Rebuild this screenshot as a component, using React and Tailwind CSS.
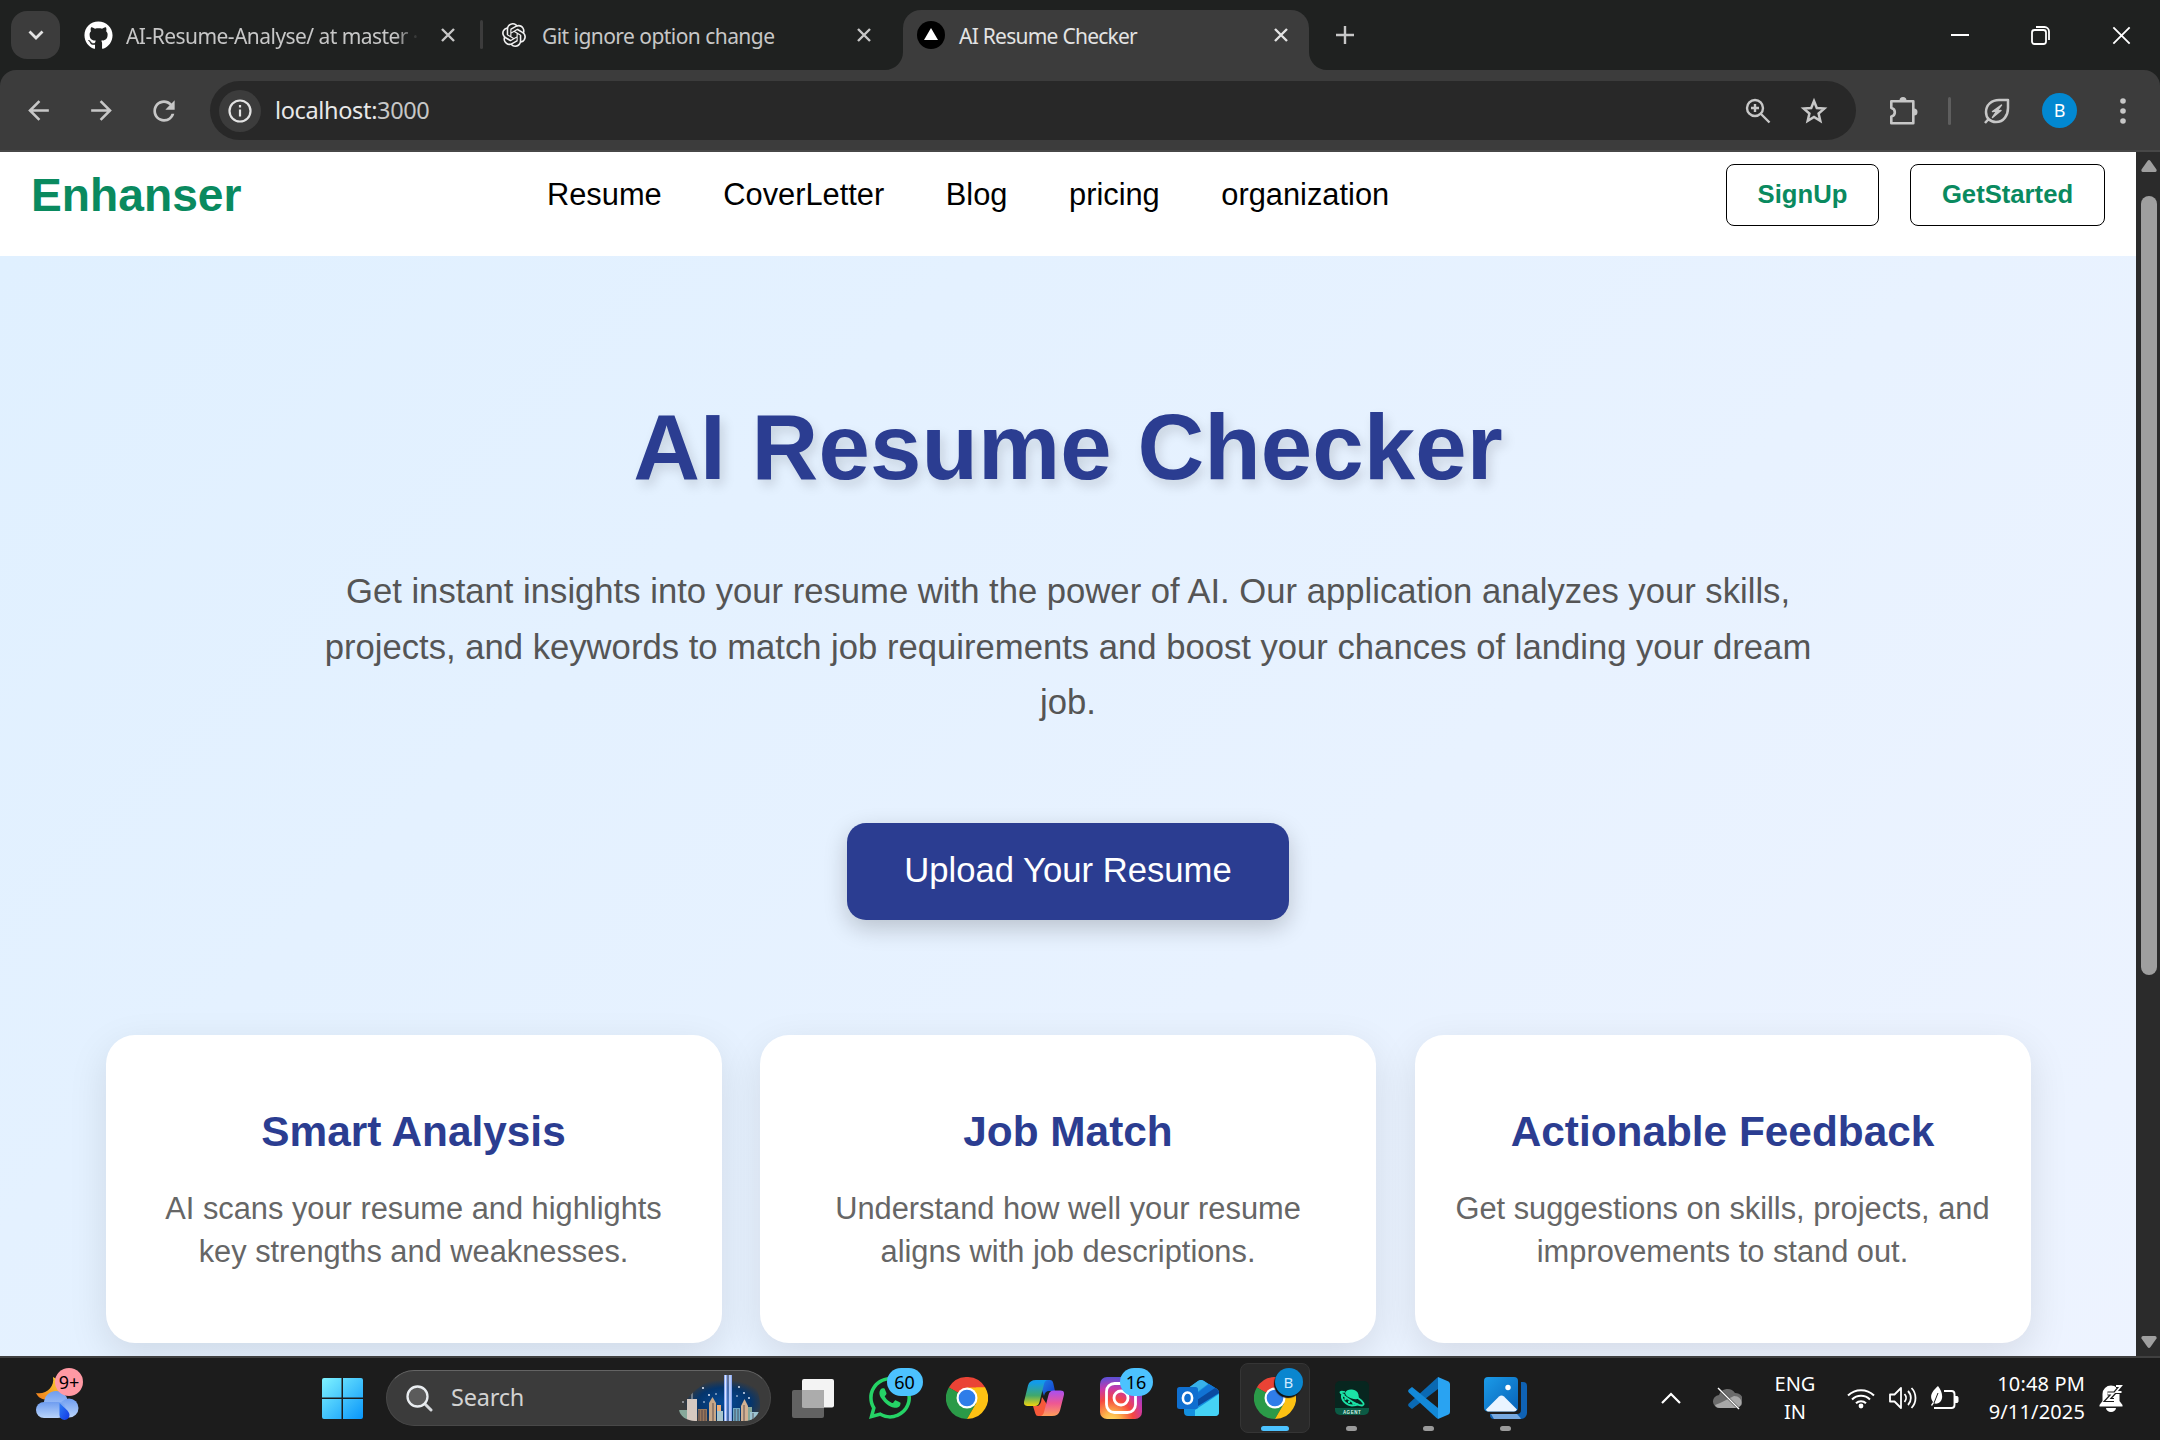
import React from "react";
import { FaGithub, FaWhatsapp } from "react-icons/fa";
import { SiOpenai } from "react-icons/si";
import { MdArrowBack, MdArrowForward, MdRefresh } from "react-icons/md";

const ui = "font-['Noto_Sans','Open_Sans',sans-serif]";
const arial = "font-['Liberation_Sans',Arial,sans-serif]";

function Cross({ className = "", size = 14, w = 2.4 }) {
  return (
    <svg width={size} height={size} viewBox="0 0 14 14" className={"shrink-0 " + className} fill="none" stroke="currentColor" strokeWidth={w}>
      <path d="M1 1 13 13M13 1 1 13" />
    </svg>
  );
}

function TabBar() {
  return (
    <div className={"flex h-[70px] bg-[#1f2120] text-[#c7c7c7] text-[21px] " + ui}>
      <div className="ml-[11px] mt-[11px] flex h-12 w-[49px] items-center justify-center rounded-[16px] bg-[#3c3c3c]">
        <svg width="16" height="10" viewBox="0 0 16 10" fill="none" stroke="#e3e3e3" strokeWidth="2.8"><path d="M1.5 1.5 8 8l6.500-6.500" /></svg>
      </div>
      <div className="flex h-[70px] w-[420px] items-center pl-6">
        <FaGithub size={29} color="#fff" className="shrink-0" />
        <div className="ml-[13px] w-[293px] shrink-0 whitespace-nowrap pt-[3px] [mask-image:linear-gradient(90deg,#000_92%,transparent)]"><span className="tracking-[-0.55px]">AI-Resume-Analyse/ at master ·</span></div>
        <Cross className="ml-[22px]" />
      </div>
      <div className="mt-5 h-[29px] w-[3px] rounded bg-[#3c3c3c]" />
      <div className="flex h-[70px] w-[402px] items-center pl-[19px]">
        <SiOpenai size={24} color="#f1f1f1" className="shrink-0" />
        <span className="ml-[16px] w-[315px] whitespace-nowrap pt-[3px] tracking-[-0.55px]">Git ignore option change</span>
        <Cross />
      </div>
      <svg width="18" height="18" viewBox="0 0 18 18" className="mt-[52px]"><path d="M18 0v18H0C10 18 18 10 18 0Z" fill="#3c3c3c" /></svg>
      <div className="mt-[10px] flex h-[60px] w-[406px] items-center rounded-t-[18px] bg-[#3c3c3c] pb-[10px] text-[#e3e3e3]">
        <svg width="28" height="28" viewBox="0 0 28 28" className="ml-[14px] shrink-0"><circle cx="14" cy="14" r="14" fill="#000" /><path d="M14 7 21 19H7Z" fill="#fff" /></svg>
        <span className="ml-[14px] w-[315px] whitespace-nowrap pt-[3px] tracking-[-0.75px]">AI Resume Checker</span>
        <Cross />
      </div>
      <svg width="18" height="18" viewBox="0 0 18 18" className="mt-[52px]"><path d="M0 0v18h18C8 18 0 10 0 0Z" fill="#3c3c3c" /></svg>
      <svg width="18" height="18" viewBox="0 0 18 18" className="ml-[9px] mt-[26px]" stroke="#c7c7c7" strokeWidth="2.4"><path d="M9 0v18M0 9h18" /></svg>
      <div className="ml-auto mr-[29px] flex h-[70px] items-center gap-[62px] text-white">
        <svg width="18" height="18" viewBox="0 0 18 18" stroke="#fff" strokeWidth="2"><path d="M0 9h18" /></svg>
        <svg width="19" height="19" viewBox="0 0 19 19" fill="none" stroke="#fff" strokeWidth="1.8"><rect x="1" y="4" width="14" height="14" rx="2.500" /><path d="M5 1h8.500A4.500 4.500 0 0 1 18 5.500V14" /></svg>
        <Cross size={19} w={1.35} />
      </div>
    </div>
  );
}

function Toolbar() {
  return (
    <div className="bg-[#1f2120]">
      <div className={"flex h-[82px] items-center rounded-t-[16px] border-b-2 border-[#474747] bg-[#3c3c3c] pt-px text-[#c7c7c7] " + ui}>
        <MdArrowBack size={31} className="ml-[23px]" />
        <MdArrowForward size={31} className="ml-[32px]" />
        <MdRefresh size={32} className="ml-[31px]" />
        <div className="ml-[30px] flex h-[59px] w-[1646px] items-center rounded-full bg-[#282828] pl-[9px]">
          <div className="flex size-[42px] items-center justify-center rounded-full bg-[#3c3c3c]">
            <svg width="24" height="24" viewBox="0 0 24 24" fill="none" stroke="#e3e3e3" strokeWidth="2.200"><circle cx="12" cy="12" r="10.500" /><path d="M12 10.500v7M12 6v2.600" /></svg>
          </div>
          <span className="ml-[14px] whitespace-nowrap pt-px text-[23.5px] tracking-[-0.35px] text-[#e8e8e8]">localhost:<span className="text-[#c7c7c7]">3000</span></span>
          <svg width="26" height="26" viewBox="0 0 26 26" className="ml-auto mr-[29px]" fill="none" stroke="#c7c7c7" strokeWidth="2.400"><circle cx="10" cy="10" r="8" /><path d="M15.500 15.500 24.500 24.500M10 6v8M6 10h8" /></svg>
          <svg width="28" height="28" viewBox="0 0 28 28" className="mr-[28px]" fill="none" stroke="#c7c7c7" strokeWidth="2.500"><path d="M14 4 16.800 11 24.300 11.600 18.600 16.500 20.300 23.800 14 19.900 7.700 23.800 9.400 16.500 3.700 11.600 11.200 11Z" /></svg>
        </div>
        <svg width="30" height="30" viewBox="0 0 30 30" className="ml-[33px] shrink-0" fill="none" stroke="#c7c7c7" strokeWidth="2.600" strokeLinejoin="round">
          <path d="M2.300 5.300H24.300V27.300H2.300V20.500c4.700-1 4.700-7.500 0-8.500Z" />
          <path d="M10.500 4.500a3.500 3.500 0 0 1 7 0ZM25 12.500a3.500 3.500 0 0 1 0 7Z" fill="#c7c7c7" stroke="none" />
        </svg>
        <div className="ml-[29px] h-7 w-[3px] rounded bg-[#5e5e5e]" />
        <svg width="26" height="26" viewBox="0 0 26 26" className="ml-[33px] shrink-0" fill="none" stroke="#c7c7c7" strokeWidth="2.500" strokeLinejoin="round">
          <path d="M24 2H15C7.500 2 2 7 2 14c0 6 4 10 10 10 8 0 12-7 12-14ZM5 20.500 1 25" /><path d="M17.500 7 8.500 13.500 17 12.500 8.500 19.500 12.500 13.500Z" strokeWidth="1.500" fill="#c7c7c7" />
        </svg>
        <div className="ml-[32px] flex size-[35px] items-center justify-center rounded-full bg-[#0288d1] text-[18px] text-white">B</div>
        <svg width="6" height="26" viewBox="0 0 6 26" className="ml-[43px]" fill="#c7c7c7"><circle cx="3" cy="3" r="2.800" /><circle cx="3" cy="13" r="2.800" /><circle cx="3" cy="23" r="2.800" /></svg>
      </div>
    </div>
  );
}

function Card({ title, lines }) {
  return (
    <div className="flex h-[308px] w-[616px] flex-col items-center rounded-[29px] bg-white pt-[73px] shadow-[0_12px_39px_rgba(0,0,0,0.1)]">
      <h2 className="text-[42.35px] font-bold leading-[48px] text-[#2b3d91]">{title}</h2>
      <p className="mt-[31px] whitespace-nowrap text-center text-[30.8px] leading-[43.1px] text-[#666]">{lines[0]}<br />{lines[1]}</p>
    </div>
  );
}

function Page() {
  return (
    <div className={"h-[1204px] w-[2136px] overflow-hidden bg-white " + arial}>
      <nav className="flex h-[104px] items-start pl-8 pr-[31px]">
        <div className="mt-[16px] w-[515px] text-[46.2px] font-bold leading-[54px] text-[#0a8a5f]"><span className="-ml-px">Enhanser</span></div>
        <div className="mt-[25px] flex gap-[61.6px] text-[30.8px] leading-[36px] text-black">
          <span>Resume</span><span>CoverLetter</span><span>Blog</span><span>pricing</span><span>organization</span>
        </div>
        <div className="ml-auto mt-[12px] flex gap-[31px] text-[25.67px] font-bold text-[#0a8a5f]">
          <button className="h-[62px] w-[153px] rounded-[8px] border border-black pb-[2px]">SignUp</button>
          <button className="h-[62px] w-[195px] rounded-[8px] border border-black pb-[2px]">GetStarted</button>
        </div>
      </nav>
      <main className="flex h-[1800px] flex-col items-center bg-[linear-gradient(135deg,#e0f0ff,#f0f4ff)]">
        <h1 className="mt-[138px] whitespace-nowrap text-[92.4px] font-bold leading-[106px] tracking-[0.1px] text-[#2b3d91] [text-shadow:4px_6px_12px_rgba(0,0,0,0.13)]">AI Resume Checker</h1>
        <p className="mt-[64px] w-[1540px] text-center text-[34.65px] leading-[55.5px] text-[#555]">Get instant insights into your resume with the power of AI. Our application analyzes your skills, projects, and keywords to match job requirements and boost your chances of landing your dream job.</p>
        <button className="mt-[92px] h-[97px] w-[442px] rounded-[19px] bg-[#2b3d91] pb-px text-[34.65px] text-white shadow-[0_8px_23px_rgba(0,0,0,0.2)]">Upload Your Resume</button>
        <div className="mt-[115px] flex gap-[38.5px]">
          <Card title="Smart Analysis" lines={["AI scans your resume and highlights", "key strengths and weaknesses."]} />
          <Card title="Job Match" lines={["Understand how well your resume", "aligns with job descriptions."]} />
          <Card title="Actionable Feedback" lines={["Get suggestions on skills, projects, and", "improvements to stand out."]} />
        </div>
      </main>
    </div>
  );
}

function Scrollbar() {
  return (
    <div className="flex w-6 flex-col items-center bg-[#2b2b2b] pl-px pt-2">
      <svg width="16" height="12" viewBox="0 0 16 12" fill="#9f9f9f"><path d="M6.500 1Q8-1 9.500 1L15.500 9.500Q16 12 14 12H2Q0 12 .5 9.500Z" /></svg>
      <div className="mt-6 h-[779px] w-4 rounded-full bg-[#9f9f9f]" />
      <svg width="16" height="12" viewBox="0 0 16 12" fill="#9f9f9f" className="mb-2 mt-auto"><path d="M6.500 11Q8 13 9.500 11L15.500 2.500Q16 0 14 0H2Q0 0 .5 2.500Z" /></svg>
    </div>
  );
}

function Chrome() {
  return (
    <svg width="42" height="42" viewBox="0 0 48 48">
      <path d="M24 24 3.200 12A24 24 0 0 1 44.800 12Z" fill="#ea4335" />
      <path d="M3.200 12A24 24 0 0 0 24 48L34.400 30 24 24Z" fill="#2b9a48" />
      <path d="M44.800 12A24 24 0 0 1 24 48L34.400 30V12Z" fill="#fdc113" />
      <path d="M24 12H44.800L34.400 30Z" fill="#fdc113" />
      <path d="M3.200 12 13.600 30 24 24Z" fill="#2b9a48" />
      <circle cx="24" cy="24" r="12" fill="#fff" /><circle cx="24" cy="24" r="9.500" fill="#2f7de9" />
    </svg>
  );
}

function Weather() {
  return (
    <svg width="44" height="44" viewBox="0 0 44 44">
      <defs>
        <linearGradient id="moon" x1="0" y1="1" x2="1" y2="0"><stop stopColor="#f07b1c" /><stop offset="1" stopColor="#fbd033" /></linearGradient>
        <linearGradient id="cl" x1="0" y1="0" x2="0" y2="1"><stop stopColor="#6f9df0" /><stop offset="1" stopColor="#b9d4fb" /></linearGradient>
        <linearGradient id="drop" x1="0" y1="0" x2="1" y2="1"><stop stopColor="#2c7cf5" /><stop offset="1" stopColor="#1238e6" /></linearGradient>
      </defs>
      <path d="M17 0c8 3 9 12 4 18S4 25 0 16c10 2 19-6 17-16Z" fill="url(#moon)" />
      <circle cx="20" cy="26" r="12" fill="url(#cl)" /><circle cx="33" cy="31" r="9.500" fill="url(#cl)" />
      <rect x="0" y="25" width="30" height="16" rx="8" fill="url(#cl)" />
      <path d="M23.500 26c5 5 10 8 10 12a5 5 0 0 1-10 0Z" fill="url(#drop)" />
    </svg>
  );
}

function Skyline() {
  return (
    <svg width="82" height="46" viewBox="0 0 82 46">
      <defs>
        <radialGradient id="sky" cx=".55" cy=".6" r=".5"><stop stopColor="#064a96" /><stop offset=".65" stopColor="#05356c" /><stop offset="1" stopColor="#05356c" stopOpacity="0" /></radialGradient>
        <clipPath id="hill"><path d="M0 34C18 8 38 0 55 0c18 0 27 15 26 34-3 9-9 12-16 12H16C8 46 0 41 0 34Z" /></clipPath>
      </defs>
      <g clipPath="url(#hill)">
        <rect width="82" height="46" fill="url(#sky)" />
        <path d="M0 35h8v11H0zM64 32h9v14h-9z" fill="#87a89a" />
        <path d="M8 24h10v22H8z" fill="#d5c8c0" /><path d="M13 17v8" stroke="#bbb" />
        <path d="M19 34h9v12h-9z" fill="#97765a" />
        <path d="M30 28l3.500-6 3.500 6v18h-7z" fill="#c9a887" />
        <path d="M38 30h4v16h-4z" fill="#efb07a" /><path d="M38 36h6v10h-6z" fill="#a9c5cc" />
        <path d="M54 33h7v13h-7z" fill="#6fa9c4" />
        <path d="M62 31l3.500-7 3.500 7v15h-7z" fill="#d2b193" /><path d="M71 37h9v9h-9z" fill="#9cc3d1" />
        <path d="M20 35v11M23 35v11M26 35v11M34 28v18M56 34v12M59 34v12M65 30v16M74 38v8" stroke="#453b45" strokeWidth=".8" />
      </g>
      <path d="M45 0h3.500v46H45zM49.500 0H53v46h-3.500z" fill="#8ca9ef" /><path d="M46.500 0v46M51 0v46" stroke="#dbe6ff" />
      <g fill="#e8eefc"><circle cx="24" cy="13" r="1" /><circle cx="30" cy="20" r="1" /><circle cx="37" cy="19" r=".8" /><circle cx="25" cy="27" r=".8" /><circle cx="4" cy="27" r=".8" /><circle cx="60" cy="12" r=".9" /><circle cx="65" cy="18" r=".9" /><circle cx="70" cy="23" r=".9" /><circle cx="58" cy="21" r=".8" /></g>
    </svg>
  );
}

function Copilot() {
  return (
    <svg width="40" height="36" viewBox="0 0 40 36">
      <defs>
        <linearGradient id="cp1" x1="0" y1="0" x2="0" y2="1"><stop offset=".1" stopColor="#129bea" /><stop offset=".6" stopColor="#41a86b" /><stop offset="1" stopColor="#f4d40e" /></linearGradient>
        <linearGradient id="cp2" x1="0" y1="0" x2="0" y2="1"><stop stopColor="#a84ff2" /><stop offset=".5" stopColor="#ee5793" /><stop offset="1" stopColor="#ff9e5a" /></linearGradient>
        <linearGradient id="cp3" x1="0" y1="0" x2="1" y2="1"><stop stopColor="#1f83e6" /><stop offset="1" stopColor="#1238c9" /></linearGradient>
      </defs>
      <path d="M17 0h9q2.500 0 3.200 3L31 11h-6q-4 0-5 5l-2-6Z" fill="url(#cp3)" />
      <path d="M22 36h-8q-2 0-2.700-2.500L9 26h4q2.500 0 4-4l1-5 4 6Z" fill="#f7593a" />
      <path d="M12 0h12q-3 0-4 4l-4.500 18q-1 4-4.500 4H3.500q-4.500 0-3.300-5L4 5.500Q5.500 0 12 0Z" fill="url(#cp1)" />
      <path d="M28 36H16q3 0 4-4l4.500-17q1-4.500 5-4.500h7q4.500 0 3.300 5L36 30.500Q34.500 36 28 36Z" fill="url(#cp2)" />
    </svg>
  );
}

function Instagram() {
  return (
    <svg width="42" height="42" viewBox="0 0 42 42">
      <defs>
        <radialGradient id="ig" cx=".27" cy="1.050" r="1.050"><stop stopColor="#ffdd66" /><stop offset=".2" stopColor="#fdb44a" /><stop offset=".5" stopColor="#f5473f" /><stop offset=".75" stopColor="#c837ab" /><stop offset="1" stopColor="#5b50d6" /></radialGradient>
      </defs>
      <rect width="42" height="42" rx="7" fill="url(#ig)" />
      <rect x="6.500" y="6.500" width="29" height="29" rx="8" fill="none" stroke="#fff" strokeWidth="2.800" />
      <circle cx="21" cy="21" r="7" fill="none" stroke="#fff" strokeWidth="2.800" />
    </svg>
  );
}

function Outlook() {
  return (
    <svg width="42" height="36" viewBox="0 0 42 36">
      <path d="M7 11 21 1q3-2 6 0l13 8q2 1.500 2 4v19a4 4 0 0 1-4 4H11a4 4 0 0 1-4-4Z" fill="#1490df" />
      <path d="M10 9 21 1q3-2 6 0l4 3-16 12Z" fill="#38b1ea" /><path d="M18 15 32 4l8 5q2 1.500 2 4L21 26Z" fill="#1173d4" /><path d="M20 20 38 8q4 2 4 5L21 26Z" fill="#0a4a9f" />
      <path d="m42 14-24 16v6h20a4 4 0 0 0 4-4Z" fill="#45d3f5" />
      <rect y="7" width="21" height="22" rx="2.500" fill="#0f6fd0" />
      <ellipse cx="10.500" cy="18" rx="4.600" ry="5.500" fill="none" stroke="#fff" strokeWidth="2.600" />
    </svg>
  );
}

function Agent() {
  return (
    <svg width="34" height="34" viewBox="0 0 34 34">
      <rect width="34" height="34" rx="5" fill="#07261f" /><path d="M0 27h34v2a5 5 0 0 1-5 5H5a5 5 0 0 1-5-5Z" fill="#0b5a44" />
      <g fill="none" stroke="#1be3a6" strokeWidth="1.800" strokeLinejoin="round">
        <path d="M9.500 14C4 12 4 9.500 10 11M23 17c6 4 7 7 4 7.500-3 0-9-3-13-6-4-2.500-7-5-8-7" />
        <path d="M11 12c2-4 10-3.500 11.500 1.500L23 17c-3 1-11-1-12-5Z" fill="#1be3a6" />
        <path d="M7 14c-1 5 4 10 10 10.500 3 0 5-.5 6.500-1.500" />
      </g>
      <g fill="#1be3a6"><circle cx="10.500" cy="18" r="1.200" /><circle cx="14" cy="21" r="1.200" /><circle cx="18.500" cy="22.500" r="1.200" /></g>
      <text x="17" y="32.500" textAnchor="middle" fontSize="4.500" fontWeight="700" fill="#d7f5ea" fontFamily="Liberation Sans" letterSpacing=".5">AGENT</text>
    </svg>
  );
}

function VsCode() {
  return (
    <svg width="42" height="42" viewBox="0 0 42 42">
      <path d="M0.800 26.500 30 0v12L4 32 .8 29.500Q-.5 28 .8 26.500Z" fill="#0a69b3" />
      <path d="M4 10 30 31V42L28 40.500 .8 15.500Q-.5 14 .8 12.500Z" fill="#1389d8" />
      <path d="M30 0 40.500 4.500Q42 5.500 42 7v28q0 1.500-1.500 2.500L30 42Z" fill="#29a3f2" />
    </svg>
  );
}

function Photos() {
  return (
    <svg width="43" height="42" viewBox="0 0 43 42">
      <defs><linearGradient id="ph" x1="0" y1="0" x2="1" y2="1"><stop stopColor="#1b9be8" /><stop offset="1" stopColor="#0862b8" /></linearGradient></defs>
      <path d="M37 5h2a4 4 0 0 1 4 4v27a6 6 0 0 1-6 6H10a4 4 0 0 1-4-4v-1h27a4 4 0 0 0 4-4Z" fill="#0f62b4" />
      <path d="M7 37h26l4 4.500-1 .5H10Z" fill="#77a9e0" />
      <rect width="34" height="34.500" rx="4" fill="url(#ph)" />
      <path d="M2 32.500 15 19.500q2.500-2 5 0l13 13q-1 2-3 2H4q-1.500 0-2-2Z" fill="#eaf4ff" /><circle cx="24" cy="10.500" r="2.700" fill="#fff" />
    </svg>
  );
}

function Badge({ children, className }) {
  return <div className={"absolute flex h-7 items-center justify-center rounded-full text-[18px] " + className}>{children}</div>;
}

function TaskbarItem({ children, dot, active }) {
  return (
    <div className="flex w-[77px] justify-center">
      <div className={"relative flex h-[70px] w-[70px] items-center justify-center " + (active ? "rounded-[8px] border border-[#353535] bg-[#292929]" : "")}>
        {children}
        {active && <div className="absolute bottom-[1px] h-[5px] w-7 rounded-full bg-[#4cc2ff]" />}
        {dot && <div className="absolute bottom-[2px] h-[5px] w-[11px] rounded-full bg-[#9a9a9a]" />}
      </div>
    </div>
  );
}

function Taskbar() {
  return (
    <div className={"flex h-[84px] items-center border-t-2 border-[#404040] bg-[#1c1c1c] pb-[2px] text-white " + ui}>
      <div className="relative ml-9 h-[42px]">
        <Weather />
        <Badge className="-top-[9px] left-[19px] w-7 bg-[#ff99a4] text-black">9+</Badge>
      </div>
      <svg width="41" height="41" viewBox="0 0 41 41" className="ml-[242px]">
        <defs><linearGradient id="win" x1="0" y1="0" x2="41" y2="41" gradientUnits="userSpaceOnUse"><stop stopColor="#7ff3ff" /><stop offset="1" stopColor="#0996fa" /></linearGradient></defs>
        <path d="M2 0h17.500v19.500H0V2Q0 0 2 0ZM21 0h18q2 0 2 2v17.500H21ZM0 21h19.500v20H2q-2 0-2-2ZM21 21h20v18q0 2-2 2H21Z" fill="url(#win)" />
      </svg>
      <div className="ml-[23px] flex h-14 w-[385px] items-center rounded-full border border-[#484848] border-t-[#646464] bg-[#3b3b3b]">
        <svg width="27" height="27" viewBox="0 0 27 27" className="ml-[19px]"><path d="m17.500 17.500 7.500 7.500" stroke="#d6d9dc" strokeWidth="3" strokeLinecap="round" /><circle cx="11.500" cy="11.500" r="10" fill="#5b5b5b" stroke="#e9edf0" strokeWidth="2.300" /></svg>
        <span className="ml-[18px] text-[23.5px] tracking-[-0.2px] text-[#d2d2d2]">Search</span>
        <div className="ml-auto mr-[9px]"><Skyline /></div>
      </div>
      <div className="ml-[3px] flex">
        <TaskbarItem><svg width="42" height="39" viewBox="0 0 42 39"><rect y="11" width="32" height="28" rx="2" fill="#626262" /><rect x="10" width="32" height="28.500" rx="2" fill="#f3f3f3" /><path d="M10 11h22v17.500H10Z" fill="#acacac" /></svg></TaskbarItem>
        <TaskbarItem><FaWhatsapp size={48} color="#25d366" /><Badge className="left-[32px] top-[5px] w-9 bg-[#4cc2ff] text-black">60</Badge></TaskbarItem>
        <TaskbarItem><Chrome /></TaskbarItem>
        <TaskbarItem><Copilot /></TaskbarItem>
        <TaskbarItem><Instagram /><Badge className="left-[34px] top-[5px] w-[33px] bg-[#4cc2ff] text-black">16</Badge></TaskbarItem>
        <TaskbarItem><Outlook /></TaskbarItem>
        <TaskbarItem active><Chrome /><Badge className="left-[34px] top-[4px] w-7 bg-[#0a86cf] !text-[15px] text-[#cfeaff] shadow-[-1px_2px_1px_#111]">B</Badge></TaskbarItem>
        <TaskbarItem dot><Agent /></TaskbarItem>
        <TaskbarItem dot><VsCode /></TaskbarItem>
        <TaskbarItem dot><Photos /></TaskbarItem>
      </div>
      <div className="ml-auto mr-[36px] flex items-center text-[20px] leading-[28px]">
        <svg width="20" height="12" viewBox="0 0 20 12" fill="none" stroke="#fff" strokeWidth="2.200"><path d="m1 11 9-9 9 9" /></svg>
        <svg width="29" height="23" viewBox="0 0 29 23" className="ml-[32px]"><path d="M7 21a6.500 6.500 0 0 1-1-13A9 9 0 0 1 22 6a7.500 7.500 0 0 1 1 15Z" fill="#6b6b6b" /><path d="M2 18c6-2 12-6 19-9 9 0 10 11 2 12H7Q3 21 2 18Z" fill="#a8a8a8" /><path d="m5 1 21 21" stroke="#1c1c1c" strokeWidth="2.400" /><path d="m5 1 21 21" stroke="#fff" strokeWidth="1.400" /></svg>
        <div className="ml-[32px] w-[42px] text-center">ENG<br />IN</div>
        <svg width="28" height="22" viewBox="0 0 28 22" className="ml-[31px]" fill="none" stroke="#fff" strokeWidth="2"><path d="M1 8.500a18.500 18.500 0 0 1 26 0M5 12.500a12.700 12.700 0 0 1 18 0M9 16.300a7 7 0 0 1 10 0" /><circle cx="14" cy="19" r="2.400" fill="#fff" stroke="none" /></svg>
        <svg width="28" height="24" viewBox="0 0 28 24" className="ml-[14px]" fill="none" stroke="#fff" strokeWidth="1.800"><path d="M1 8.500h4.500L12 2v20l-6.500-6.500H1ZM15.500 8a6 6 0 0 1 0 8M19 5a10 10 0 0 1 0 14M22.500 2a14.500 14.500 0 0 1 0 20" strokeLinejoin="round" /></svg>
        <svg width="29" height="24" viewBox="0 0 29 24" className="ml-[13px]" fill="none" stroke="#fff" strokeWidth="1.900"><path d="M14 5h7.500A3 3 0 0 1 24.500 8v11a3 3 0 0 1-3 3H4" /><path d="M25 10.500h2q1 0 1 1v4q0 1-1 1h-2Z" fill="#fff" strokeWidth="1" /><path d="M8 0c4 5 6 12 2 16-2 2-5 2-6 1l-2 3-1-1 2-3C-2 9 4 4 8 0Z" fill="#fff" stroke="none" /><path d="M8 7 4 17" stroke="#1c1c1c" strokeWidth="1" /></svg>
        <div className="ml-[26px] w-[100px] whitespace-nowrap text-right tracking-[0.15px]">10:48 PM<br />9/11/2025</div>
        <svg width="25" height="28" viewBox="0 0 25 28" className="ml-[14px]"><path d="M3.500 17V10a8.500 8.500 0 0 1 17 0v7l3 4v1.500H.5V21ZM7 24h10a5 4 0 0 1-10 0Z" fill="#fff" /><path d="M8.500 9.500h6L8.500 16H15M17 2h5l-5 6h5.500" fill="none" stroke="#1c1c1c" strokeWidth="4.200" /><path d="M8.500 9.500h6L8.500 16H15M17 2h5l-5 6h5.500" fill="none" stroke="#fff" strokeWidth="1.800" /></svg>
      </div>
    </div>
  );
}

export default function App() {
  return (
    <div className="flex h-[1440px] w-[2160px] flex-col overflow-hidden bg-[#1f2120]">
      <TabBar />
      <Toolbar />
      <div className="flex h-[1204px]"><Page /><Scrollbar /></div>
      <Taskbar />
    </div>
  );
}
